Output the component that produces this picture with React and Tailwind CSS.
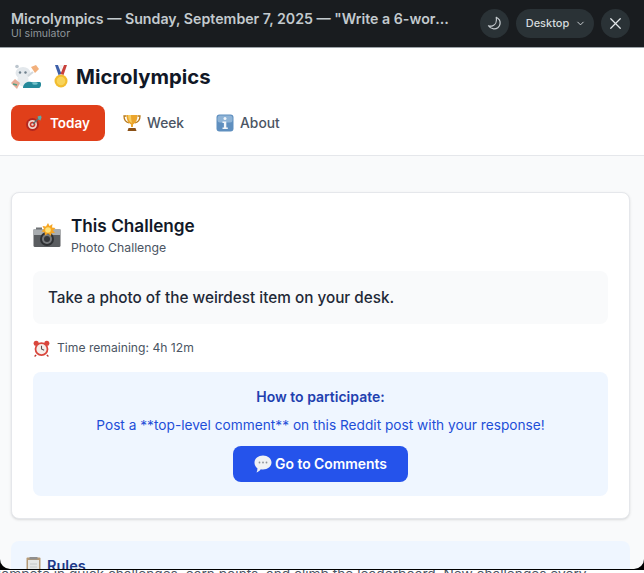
import { ChevronDown, X } from 'lucide-react'

const Snoo = () => (
  <svg width="30" height="25" viewBox="0 0 30 25" className="shrink-0">
    <path d="M20 3l5-2 3 4-4 4z" fill="#f2b07c" />
    <ellipse cx="12" cy="9" rx="7.500" ry="6" fill="#e3e8ec" />
    <ellipse cx="12" cy="16" rx="5.500" ry="6.500" fill="#e9edf0" />
    <circle cx="9" cy="8.500" r="1.200" fill="#6f808d" />
    <circle cx="14.500" cy="8.500" r="1.200" fill="#6f808d" />
    <circle cx="6" cy="2.500" r="1.800" fill="#bcc6ce" />
    <path d="M17 12l5-4" stroke="#d3d9dd" strokeWidth="2.200" />
    <path d="M0 19l4-4 5 4-3 6z" fill="#e6ad98" />
    <path d="M2 20l4 1" stroke="#4f9e84" strokeWidth="1.500" />
    <path d="M12 24c0-4 4-7 8-6 3 .5 6 0 9 0 2 1 1 6-1 6z" fill="#25899a" />
    <ellipse cx="24" cy="19.500" rx="2.800" ry="1.300" fill="#74c3cb" />
  </svg>
)

const Medal = () => (
  <svg width="16" height="23" viewBox="0 0 16 23" className="shrink-0">
    <path d="M2 0h3l3.500 9-3 1z" fill="#3d5fa8" />
    <path d="M14 0h-3L7.500 9l3 1z" fill="#c8413b" />
    <path d="M6 0h4L8 6z" fill="#f0f0f0" />
    <circle cx="8" cy="16" r="6.500" fill="#f2bd2f" />
    <circle cx="8" cy="16" r="4.300" fill="#f8d45a" />
  </svg>
)

const Target = () => (
  <svg width="18" height="18" viewBox="0 0 18 18" className="shrink-0">
    <circle cx="7.500" cy="10.500" r="6.500" fill="#b3261e" />
    <circle cx="7.500" cy="10.500" r="4.500" fill="#f1d4cc" />
    <circle cx="7.500" cy="10.500" r="2.800" fill="#c7362c" />
    <circle cx="7.500" cy="10.500" r="1.200" fill="#f1d4cc" />
    <path d="M8 10l6-6" stroke="#5d6f73" strokeWidth="1.500" />
    <path d="M12.500 2.500l3.500-1 .5 2-1 3-2-1z" fill="#5fa7a8" />
  </svg>
)

const Trophy = () => (
  <svg width="18" height="18" viewBox="0 0 18 18" className="shrink-0">
    <path d="M3.500 2H1c0 4 1.500 6 5 7M14.500 2H17c0 4-1.500 6-5 7" fill="none" stroke="#b8791a" strokeWidth="1.300" />
    <path d="M3.500 1h11c0 5-1.500 8-4.500 9.500V13H8v-2.500C5 9 3.500 6 3.500 1z" fill="#eba52c" />
    <path d="M5 1h3c0 3 .3 5 1 8-2.500-1-4-4-4-8z" fill="#f7cd62" />
    <path d="M5.500 14h7l1 3h-9z" fill="#8a5016" />
  </svg>
)

const Info = () => (
  <svg width="18" height="18" viewBox="0 0 18 18" className="ml-[2px] shrink-0">
    <rect x="0.500" y="0.500" width="17" height="17" rx="3" fill="#5f8fbf" />
    <rect x="1.500" y="1.500" width="15" height="7" rx="2.500" fill="#8eb3d6" />
    <circle cx="9" cy="4.500" r="1.500" fill="#f2f6fa" />
    <path d="M6.500 7.500h3.800v6h1.500v1.500H6.500v-1.500h1.400V9H6.500z" fill="#f2f6fa" />
  </svg>
)

const Camera = () => (
  <svg width="28" height="26" viewBox="0 0 28 26" className="shrink-0">
    <rect x="0.500" y="6" width="27" height="18" rx="1.500" fill="#5a5d60" />
    <rect x="0.500" y="6" width="27" height="6" fill="#a9adb0" />
    <rect x="3" y="4.500" width="6" height="2" fill="#6f7275" />
    <circle cx="14" cy="16" r="7" fill="#2e3033" />
    <circle cx="14" cy="16" r="5" fill="#77797c" />
    <circle cx="14" cy="16" r="3" fill="#34363a" />
    <path d="M15 0l1.500 3 3-2-.5 3.500 3.500.5-2.500 2.500 2 2.500-3.500 0-.5 3-3-2.500-3 2-.5-3.500-3-.5 2.500-2.500-1.500-3 3.500.5z" fill="#f6a623" />
    <circle cx="15" cy="7" r="2.800" fill="#ffe27a" />
  </svg>
)

const Clock = () => (
  <svg width="17" height="17" viewBox="0 0 16 16" className="shrink-0">
    <circle cx="3" cy="3" r="2.400" fill="#d9463c" />
    <circle cx="13" cy="3" r="2.400" fill="#d9463c" />
    <path d="M3 14l-1.500 1.500M13 14l1.500 1.500" stroke="#b9362d" strokeWidth="1.300" />
    <circle cx="8" cy="8.500" r="6.500" fill="#d9463c" />
    <circle cx="8" cy="8.500" r="4.800" fill="#f6eeea" />
    <path d="M8 5.500v3l2.500 1.200" fill="none" stroke="#555" strokeWidth="1" />
  </svg>
)

const Bubble = () => (
  <svg width="18" height="18" viewBox="0 0 18 18" className="shrink-0">
    <path d="M9 .500c4.700 0 8.500 3 8.500 7s-3.800 7-8.500 7c-.7 0-1.500-.1-2.200-.2C5.500 16 4 17 2.500 17.500c.7-1.300 1-2.700.9-4.200C1.600 12 .500 9.900.500 7.500c0-4 3.800-7 8.500-7z" fill="#f0f2f4" />
    <circle cx="5.500" cy="7.500" r="0.900" fill="#8f9499" />
    <circle cx="9" cy="7.500" r="0.900" fill="#8f9499" />
    <circle cx="12.500" cy="7.500" r="0.900" fill="#8f9499" />
  </svg>
)

const Clipboard = () => (
  <svg width="15" height="18" viewBox="0 0 15 18" className="shrink-0">
    <rect x="0.500" y="0.500" width="14" height="17" rx="1" fill="#b59a77" />
    <rect x="2" y="3" width="11" height="14" fill="#e6e8e6" />
    <rect x="3.500" y="0" width="8" height="2.500" fill="#8f8f8f" />
    <path d="M4 7h7M4 10h7M4 13h7" stroke="#c4c8c8" strokeWidth="1" />
  </svg>
)

const Moon = () => (
  <svg width="15" height="15" viewBox="0 0 17 17" fill="none" stroke="#c4cace" strokeWidth="1.400" strokeLinejoin="round">
    <path d="M10.500 1.500c3 1.600 4.800 4.300 4.300 7.400-.5 3.600-3.700 6-7.300 5.700-2.500-.2-4.600-1.500-5.800-3.500 1.200.5 3 .6 4.700 0 3-1 5-4.800 4.100-9.600z" />
  </svg>
)

function Tab({ icon, label, active }) {
  return (
    <button
      className={`flex h-[36px] items-center rounded-lg ${
        active
          ? 'w-[94px] gap-[7px] bg-[#e03f1a] pl-[14px] text-[13.5px] font-semibold text-white'
          : 'gap-[6px] px-[12px] text-[13.8px] font-medium text-[#4b5563]'
      }`}
    >
      {icon}
      {label}
    </button>
  )
}

export default function App() {
  return (
    <div className="relative h-[573px] w-[644px] overflow-hidden bg-white font-['Inter',sans-serif]">
      {/* page behind the simulator panel */}
      <p className="ml-[-9px] whitespace-nowrap pt-[564px] text-[13.7px] leading-[20px] text-[#4b5563]">
        Compete in quick challenges, earn points, and climb the leaderboard. New challenges every
      </p>

      <div className="absolute inset-x-0 top-0 h-[570px] bg-black">
        <div className="flex h-[569px] flex-col overflow-hidden rounded-b-[10px] bg-[#f9fafb]">
          <header className="flex h-[48px] shrink-0 items-center border-b border-[#9ca3a8] bg-[#191c1f] pl-[11px] pr-[14px]">
            <div className="min-w-0 flex-1 pr-[30px]">
              <div className="truncate pt-[2px] text-[14.2px] font-semibold leading-[18px] text-[#c3cace]">
                Microlympics — Sunday, September 7, 2025 — "Write a 6-word story about your day"
              </div>
              <div className="text-[10.5px] leading-[12px] text-[#8f969b]">UI simulator</div>
            </div>
            <div className="flex items-center gap-[7px]">
              <button className="flex size-[29px] items-center justify-center rounded-full bg-[#2a3236]">
                <Moon />
              </button>
              <button className="flex h-[29px] w-[78px] items-center justify-center gap-[6px] rounded-full bg-[#2a3236] pl-[2px] text-[11px] font-medium text-[#d5dadd]">
                Desktop
                <ChevronDown size={11} strokeWidth={2} />
              </button>
              <button className="flex size-[29px] items-center justify-center rounded-full bg-[#2a3236] text-[#e3e7e9]">
                <X size={19} strokeWidth={1.6} />
              </button>
            </div>
          </header>

          <nav className="h-[108px] shrink-0 border-b border-[#e5e7eb] bg-white px-[11px] pt-[16px]">
            <div className="flex h-[25px] items-center">
              <Snoo />
              <div className="ml-[12px]"><Medal /></div>
              <h1 className="ml-[7px] mt-[-1px] text-[20.3px] font-bold leading-[25px] text-[#111827]">Microlympics</h1>
            </div>
            <div className="mt-[16px] flex items-center gap-[6px]">
              <Tab icon={<Target />} label="Today" active />
              <Tab icon={<Trophy />} label="Week" />
              <Tab icon={<Info />} label="About" />
            </div>
          </nav>

          <main className="pl-[11px] pr-[14px] pt-[36px]">
            <section className="h-[327px] rounded-lg border border-[#e5e7eb] bg-white px-[21px] pt-[21px] shadow-sm">
              <div className="flex items-center gap-[10px]">
                <Camera />
                <div>
                  <h2 className="text-[17.2px] font-semibold leading-[24px] text-[#111827]">This Challenge</h2>
                  <p className="text-[12.25px] leading-[19px] text-[#4b5563]">Photo Challenge</p>
                </div>
              </div>

              <div className="mt-[14px] rounded-lg bg-[#f9fafb] px-[15px] py-[14px] text-[15.3px] font-medium leading-[25px] text-[#1f2937]">
                Take a photo of the weirdest item on your desk.
              </div>

              <div className="mt-[14px] flex items-center gap-[7px] text-[12.15px] leading-[20px] text-[#4b5563]">
                <Clock />
                Time remaining: 4h 12m
              </div>

              <div className="mt-[14px] flex h-[124px] flex-col items-center rounded-lg bg-[#eff6ff] pt-[15px]">
                <h3 className="text-[14px] font-semibold leading-[20px] text-[#1e40af]">How to participate:</h3>
                <p className="mt-[8px] text-[13.7px] leading-[20px] text-[#1d4ed8]">
                  Post a **top-level comment** on this Reddit post with your response!
                </p>
                <button className="mt-[11px] flex h-[36px] w-[175px] items-center justify-center gap-[3px] rounded-lg bg-[#2553eb] text-[13.9px] font-semibold text-white">
                  <Bubble />
                  Go to Comments
                </button>
              </div>
            </section>

            <section className="mt-[22px] h-[60px] rounded-lg bg-[#eff6ff] pl-[15px] pt-[15px]">
              <div className="flex items-center gap-[6px] text-[14.5px] font-semibold leading-[20px] text-[#1e3a8a]">
                <Clipboard />
                Rules
              </div>
            </section>
          </main>
        </div>
      </div>
    </div>
  )
}
